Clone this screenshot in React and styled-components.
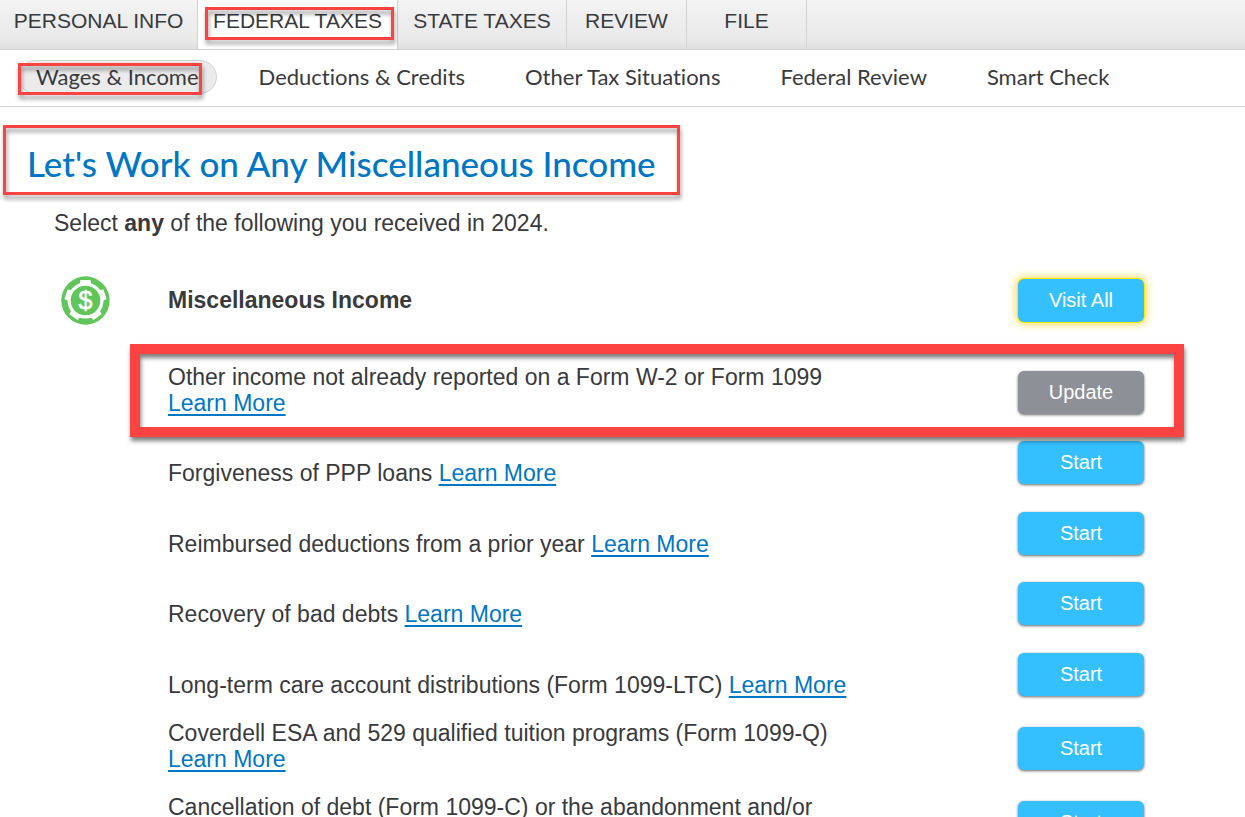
import React from 'react';
import styled, {createGlobalStyle, css} from 'styled-components';

const GlobalStyle = createGlobalStyle`
    * {
        box-sizing: border-box;
    }
    body {
        margin: 0;
        background: #fff;
        color: #393a3d;
        font-family: "Liberation Sans", Arial, sans-serif;
    }
`

const Page = styled.div`
    height: 100vh;
    overflow: hidden;
`

// Red frame laid over the element it calls out
const callout = css`
    content: "";
    position: absolute;
    z-index: 1;
    border: 3px solid #fd4242;
    filter: drop-shadow(1px 4px 2px rgba(0, 0, 0, 0.4));
    pointer-events: none;
`

const TopNav = styled.nav`
    display: flex;
    height: 50px;
    background: linear-gradient(#f5f5f5, #ededed 40%, #eaeaea 80%, #dfdfdf);
    border-bottom: 1px solid #d0d0d0;
`
const Tab = styled.a`
    position: relative;
    width: ${props => props.$width}px;
    height: 49px;
    padding-top: 9px;
    border-right: 1px solid #d2d2d2;
    color: #393a3d;
    font-size: 21px;
    line-height: 24px;
    text-align: center;
    text-decoration: none;
    white-space: nowrap;
    ${props => props.$active && css`
        background: #fff;
        &::after {
            ${callout}
            inset: 7px 3px 9px 7px;
        }
    `}
`

const SubNav = styled.nav`
    display: flex;
    align-items: center;
    gap: 24px;
    height: 57px;
    padding: 0 18px 2px;
    border-bottom: 1px solid #d0d0d0;
`
const SubTab = styled.a`
    position: relative;
    height: 34px;
    padding: 0 17px;
    border: 1px solid transparent;
    border-radius: 17px;
    color: #393a3d;
    font-family: Lato, "Open Sans", sans-serif;
    font-size: 22px;
    font-variant-ligatures: none;
    line-height: 32px;
    text-decoration: none;
    white-space: nowrap;
    ${props => props.$active && css`
        background: #ebebeb;
        border-color: #d2d2d2;
        &::after {
            ${callout}
            inset: 2px 14px -2px -1px;
        }
    `}
`

const Title = styled.h1`
    position: relative;
    width: fit-content;
    margin: 18px 0 0 3px;
    padding: 18px 24px 12px;
    color: #0077c5;
    font-family: Lato, "Open Sans", sans-serif;
    font-size: 35px;
    font-weight: 500;
    font-variant-ligatures: none;
    line-height: 40px;
    &::after {
        ${callout}
        inset: 0;
    }
`
const Intro = styled.p`
    margin: 15px 54px 0;
    font-size: 23px;
    line-height: 26px;
`

const Section = styled.section`
    padding: 0 101px 0 54px;
`
const SectionHeader = styled.div`
    display: grid;
    grid-template-columns: 114px 1fr 126px;
    align-items: center;
    height: 52px;
    margin-top: 38px;
`
const IconCell = styled.div`
    padding-left: 7px;
    line-height: 0;
`
const SectionTitle = styled.h2`
    margin: 0;
    font-size: 23px;
    line-height: 26px;
`

const List = styled.ul`
    margin: 38px 0 0;
    padding: 0 0 0 114px;
    list-style: none;
`
const Row = styled.li`
    position: relative;
    display: grid;
    grid-template-columns: 1fr 126px;
    align-items: start;
    height: ${props => props.$height}px;
    ${props => props.$marked && css`
        &::after {
            ${callout}
            inset: -20px -40px -3px -38px;
            border-width: 10px;
            filter: drop-shadow(1px 4px 2px rgba(0, 0, 0, 0.5));
        }
    `}
`
const RowText = styled.div`
    max-width: 700px;
    padding-top: ${props => props.$oneLine ? 26 : 0}px;
    font-size: 23px;
    line-height: 26px;
`
const LearnMore = styled.a`
    color: #0077c5;
    text-underline-offset: 3px;
`

const Button = styled.button`
    width: 126px;
    height: 43px;
    padding: 0;
    border: 0;
    border-radius: 6px;
    background: #34bfff;
    box-shadow: 0 1px 3px rgba(0, 0, 0, 0.6);
    color: #fff;
    font-family: inherit;
    font-size: 20px;
    ${props => props.$gray && css`
        background: #8d9096;
    `}
    ${props => props.$glow && css`
        box-shadow: 0 0 0 1px #ffe600, 0 0 8px 2px #ffd84d;
    `}
`
const RowButton = styled(Button)`
    margin-top: 7px;
`

const tabs = [
    {label: 'PERSONAL INFO', width: 198},
    {label: 'FEDERAL TAXES', width: 200, active: true},
    {label: 'STATE TAXES', width: 169},
    {label: 'REVIEW', width: 120},
    {label: 'FILE', width: 120},
];

const subTabs = [
    'Wages & Income',
    'Deductions & Credits',
    'Other Tax Situations',
    'Federal Review',
    'Smart Check',
];

const rows = [
    {text: 'Other income not already reported on a Form W-2 or Form 1099', height: 70, link: true, marked: true, started: true},
    {text: 'Forgiveness of PPP loans', height: 71, link: true, oneLine: true},
    {text: 'Reimbursed deductions from a prior year', height: 70, link: true, oneLine: true},
    {text: 'Recovery of bad debts', height: 71, link: true, oneLine: true},
    {text: 'Long-term care account distributions (Form 1099-LTC)', height: 74, link: true, oneLine: true},
    {text: 'Coverdell ESA and 529 qualified tuition programs (Form 1099-Q)', height: 74, link: true},
    {text: 'Cancellation of debt (Form 1099-C) or the abandonment and/or', height: 74},
];

function MoneyIcon() {
    return (
        <svg width="49" height="49" viewBox="-24.5 -24.5 49 49" aria-hidden="true">
            <circle r="24.2" fill="#60c659"/>
            <circle r="18" fill="#fff"/>
            {[0, 72, 144, 216, 288].map(angle => (
                <path key={angle} d="M-5 -20.5H5L6 -15H-6Z" fill="#fff" transform={`rotate(${angle})`}/>
            ))}
            <circle r="14.8" fill="#60c659"/>
            <text y="8.5" textAnchor="middle" fontSize="25" fill="#fff" stroke="#fff" strokeWidth="0.6">$</text>
        </svg>
    )
}

function IncomeRow({text, height, link, marked, started, oneLine}) {
    return (
        <Row $height={height} $marked={marked}>
            <RowText $oneLine={oneLine}>
                {text} {link && <LearnMore href="#">Learn More</LearnMore>}
            </RowText>
            <RowButton type="button" $gray={started}>
                {started ? 'Update' : 'Start'}
            </RowButton>
        </Row>
    )
}

export default function App() {
    return (
        <Page>
            <GlobalStyle/>
            <TopNav>
                {tabs.map(tab => (
                    <Tab key={tab.label} href="#" $width={tab.width} $active={tab.active}>
                        {tab.label}
                    </Tab>
                ))}
            </TopNav>
            <SubNav>
                {subTabs.map((label, index) => (
                    <SubTab key={label} href="#" $active={index === 0}>{label}</SubTab>
                ))}
            </SubNav>
            <main>
                <Title>Let's Work on Any Miscellaneous Income</Title>
                <Intro>Select <b>any</b> of the following you received in 2024.</Intro>
                <Section>
                    <SectionHeader>
                        <IconCell><MoneyIcon/></IconCell>
                        <SectionTitle>Miscellaneous Income</SectionTitle>
                        <Button type="button" $glow>Visit All</Button>
                    </SectionHeader>
                    <List>
                        {rows.map(row => <IncomeRow key={row.text} {...row}/>)}
                    </List>
                </Section>
            </main>
        </Page>
    )
}
